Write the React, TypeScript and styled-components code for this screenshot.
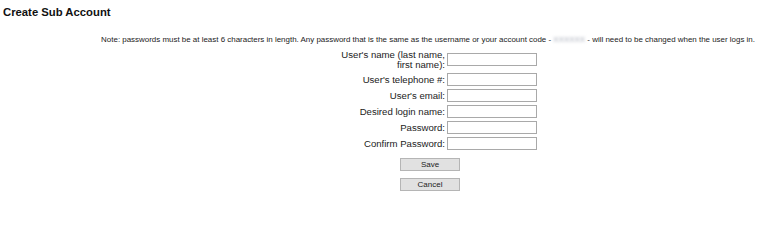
import * as React from "react";
import styled, { createGlobalStyle } from "styled-components";

const GlobalStyle = createGlobalStyle`
  html, body {
    margin: 0;
    padding: 0;
    background: #ffffff;
  }
  body {
    font-family: "Liberation Sans", Arial, sans-serif;
    color: #000;
    -webkit-font-smoothing: antialiased;
  }
`;

const Page = styled.div`
  width: 758px;
  height: 203px;
  overflow: hidden;
  padding: 5px 3px 0;
  box-sizing: border-box;
`;

const Title = styled.h1`
  margin: 0;
  font-size: 11.3px;
  font-weight: bold;
  line-height: 14px;
  color: #111;
`;

const Note = styled.p`
  margin: 16px 0 0;
  font-size: 7.95px;
  line-height: 10px;
  text-align: right;
  color: #222;
`;

const Masked = styled.span`
  color: #a4a9b6;
  filter: blur(1.4px);
`;

const Form = styled.div`
  display: grid;
  grid-template-columns: 124px 90px;
  grid-auto-rows: 13px;
  grid-template-rows: 21px;
  column-gap: 2px;
  row-gap: 3px;
  align-items: center;
  margin: 4px 0 0 318px;
`;

const Label = styled.label`
  font-size: 9.6px;
  line-height: 10px;
  text-align: right;
  color: #222;
`;

const Field = styled.input`
  box-sizing: border-box;
  width: 90px;
  height: 13px;
  margin: 0;
  padding: 0 2px;
  border: 1px solid #a9a9a9;
  background: #fff;
  font-size: 9px;
`;

const Actions = styled.div`
  display: flex;
  flex-direction: column;
  gap: 7px;
  margin: 8px 0 0 397px;
`;

const Button = styled.button`
  box-sizing: border-box;
  width: 60px;
  height: 13px;
  padding: 0;
  border: 1px solid #b5b5b5;
  background: #e1e1e1;
  font-family: "Liberation Sans", Arial, sans-serif;
  font-size: 8px;
  line-height: 11px;
  color: #222;
`;

const fields = [
  { id: "name", label: ["User's name (last name,", "first name):"], type: "text" },
  { id: "phone", label: ["User's telephone #:"], type: "text" },
  { id: "email", label: ["User's email:"], type: "text" },
  { id: "login", label: ["Desired login name:"], type: "text" },
  { id: "pw", label: ["Password:"], type: "password" },
  { id: "pw2", label: ["Confirm Password:"], type: "password" },
];

const App = () => (
  <Page>
    <GlobalStyle />
    <Title>Create Sub Account</Title>
    <Note>
      Note: passwords must be at least 6 characters in length. Any password that is the same as the
      username or your account code - <Masked>XXXXXX</Masked> - will need to be changed when the user
      logs in.
    </Note>
    <Form>
      {fields.map(f => (
        <React.Fragment key={f.id}>
          <Label htmlFor={f.id}>
            {f.label.map((line, i) => (
              <React.Fragment key={i}>
                {i > 0 && <br />}
                {line}
              </React.Fragment>
            ))}
          </Label>
          <Field id={f.id} type={f.type} />
        </React.Fragment>
      ))}
    </Form>
    <Actions>
      <Button type="button">Save</Button>
      <Button type="button">Cancel</Button>
    </Actions>
  </Page>
);

export default App;
